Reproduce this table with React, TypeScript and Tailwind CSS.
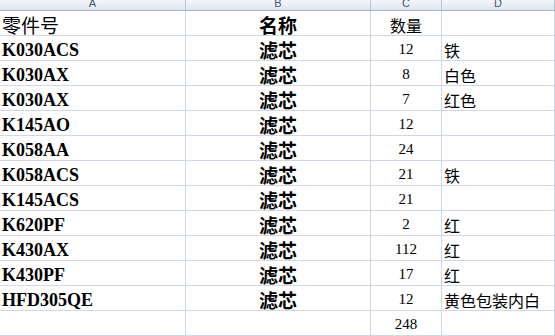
import React from 'react';

type Row = { part: string; name: string; qty: string; note: string; head?: boolean };

const rows: Row[] = [
    { part: '零件号', name: '名称', qty: '数量', note: '', head: true },
    { part: 'K030ACS', name: '滤芯', qty: '12', note: '铁' },
    { part: 'K030AX', name: '滤芯', qty: '8', note: '白色' },
    { part: 'K030AX', name: '滤芯', qty: '7', note: '红色' },
    { part: 'K145AO', name: '滤芯', qty: '12', note: '' },
    { part: 'K058AA', name: '滤芯', qty: '24', note: '' },
    { part: 'K058ACS', name: '滤芯', qty: '21', note: '铁' },
    { part: 'K145ACS', name: '滤芯', qty: '21', note: '' },
    { part: 'K620PF', name: '滤芯', qty: '2', note: '红' },
    { part: 'K430AX', name: '滤芯', qty: '112', note: '红' },
    { part: 'K430PF', name: '滤芯', qty: '17', note: '红' },
    { part: 'HFD305QE', name: '滤芯', qty: '12', note: '黄色包装内白' },
    { part: '', name: '', qty: '248', note: '' },
];

const cols = 'grid grid-cols-[186px_185px_71px_1fr]';
const cell = 'flex items-end h-[25px] border-b border-r border-[#d0d7e5] overflow-hidden whitespace-nowrap';

export default function App() {
    return (
        <div className="w-[555px] h-[336px] bg-white overflow-hidden text-black">
            {/* Column letters */}
            <div className={`${cols} h-[11px] bg-gradient-to-b from-[#f4f7fb] to-[#dfe6ef] border-b border-[#9fb3c9]`}>
                {['A', 'B', 'C', 'D'].map(l => (
                    <div key={l} className="flex justify-center items-start border-r border-[#b7c6d8] overflow-hidden">
                        <span className="text-[11px] leading-[7px] text-[#44566f] font-['Liberation_Sans',sans-serif]">{l}</span>
                    </div>
                ))}
            </div>

            {rows.map((r, i) => (
                <div key={i} className={cols}>
                    <div className={`${cell} pl-[2px] pb-[1px]`}>
                        {r.head ? (
                            <span className="text-[19px] leading-[19px] font-['Noto_Sans_CJK_SC',sans-serif]">{r.part}</span>
                        ) : (
                            <span className="text-[18px] leading-[18px] font-bold font-['Liberation_Serif','Noto_Sans_CJK_SC',serif]">{r.part}</span>
                        )}
                    </div>
                    <div className={`${cell} justify-center pb-[1px]`}>
                        <span className="text-[19px] leading-[19px] font-bold font-['Noto_Sans_CJK_SC',sans-serif]">{r.name}</span>
                    </div>
                    <div className={`${cell} justify-center ${r.head ? 'pb-[2px]' : 'pb-[3px]'}`}>
                        {r.head ? (
                            <span className="text-[16px] leading-[16px] font-['Noto_Sans_CJK_SC',sans-serif]">{r.qty}</span>
                        ) : (
                            <span className="text-[15px] leading-[15px] font-['Liberation_Serif',serif]">{r.qty}</span>
                        )}
                    </div>
                    <div className={`${cell} pl-[2px] pb-[2px]`}>
                        <span className="text-[16px] leading-[16px] font-['Noto_Sans_CJK_SC',sans-serif]">{r.note}</span>
                    </div>
                </div>
            ))}
        </div>
    );
}
